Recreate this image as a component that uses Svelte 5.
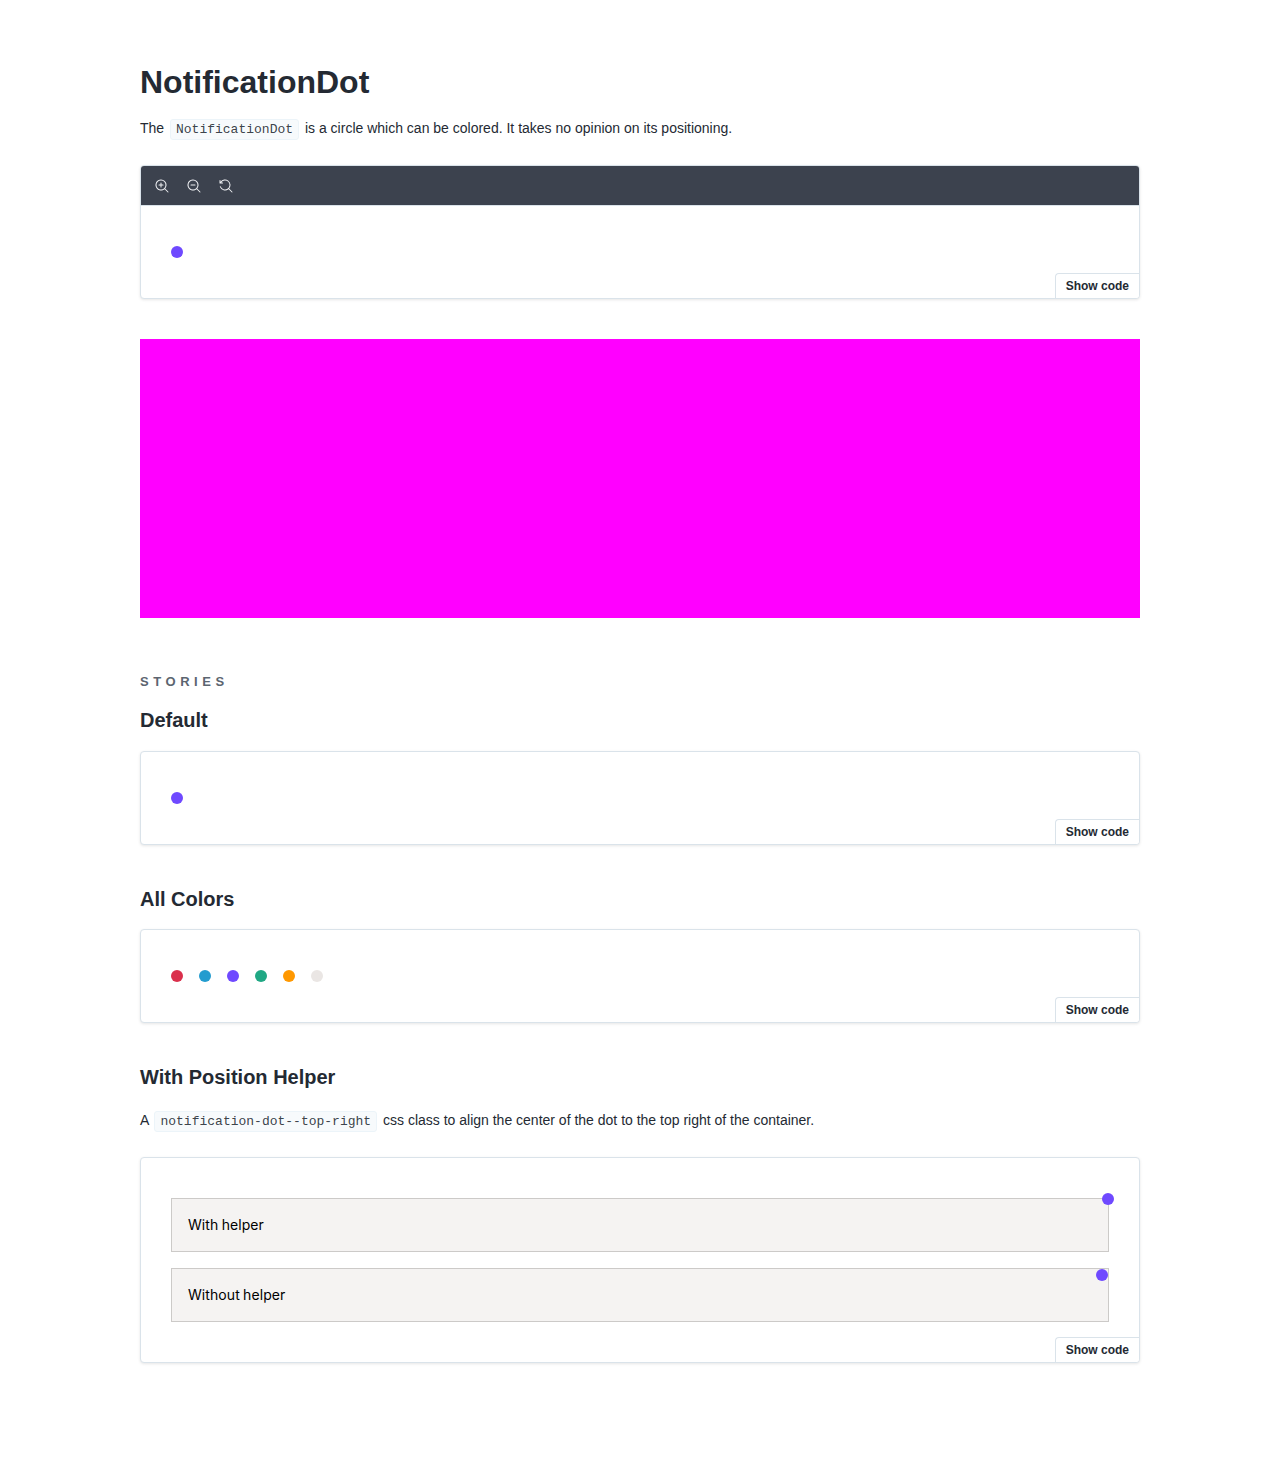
<script>
  const colors = ['red', 'blue', 'purple', 'green', 'orange', 'gray'];
  const lens =
    'M9.544 10.206a5.5 5.5 0 11.662-.662.5.5 0 01.148.102l3 3a.5.5 0 01-.708.708l-3-3a.5.5 0 01-.102-.148zM10.5 6a4.5 4.5 0 11-9 0 4.5 4.5 0 019 0z';
  const tools = [
    { label: 'Zoom in', d: 'M6 3.5a.5.5 0 01.5.5v1.5H8a.5.5 0 010 1H6.5V8a.5.5 0 01-1 0V6.5H4a.5.5 0 010-1h1.5V4a.5.5 0 01.5-.5z' + lens },
    { label: 'Zoom out', d: 'M4 5.5a.5.5 0 000 1h4a.5.5 0 000-1H4z' + lens },
    {
      label: 'Reset zoom',
      d: 'M1.5 2.837V1.5a.5.5 0 00-1 0V4a.5.5 0 00.5.5h2.5a.5.5 0 000-1H2.258a4.5 4.5 0 11-.496 4.016.5.5 0 10-.942.337 5.502 5.502 0 008.724 2.353.5.5 0 00.102.148l3 3a.5.5 0 00.708-.708l-3-3a.5.5 0 00-.148-.102A5.5 5.5 0 101.5 2.837z'
    }
  ];
</script>

{#snippet dot(color)}
  <span class="dot {color}"></span>
{/snippet}

{#snippet showCode()}
  <button class="show-code">Show code</button>
{/snippet}

<main>
  <h1>NotificationDot</h1>
  <p class="intro">The <code>NotificationDot</code> is a circle which can be colored. It takes no opinion on its positioning.</p>

  <section class="preview primary">
    <div class="toolbar">
      {#each tools as tool}
        <button class="tool" aria-label={tool.label}>
          <svg viewBox="0 0 14 14"><path fill-rule="evenodd" clip-rule="evenodd" d={tool.d} /></svg>
        </button>
      {/each}
    </div>
    <div class="canvas">{@render dot('purple')}</div>
    {@render showCode()}
  </section>

  <div class="block"></div>

  <div class="eyebrow">Stories</div>
  <h3>Default</h3>
  <section class="preview">
    <div class="canvas">{@render dot('purple')}</div>
    {@render showCode()}
  </section>

  <h3>All Colors</h3>
  <section class="preview">
    <div class="canvas dots">
      {#each colors as color}
        {@render dot(color)}
      {/each}
    </div>
    {@render showCode()}
  </section>

  <h3>With Position Helper</h3>
  <p class="note">A <code>notification-dot--top-right</code> css class to align the center of the dot to the top right of the container.</p>
  <section class="preview">
    <div class="canvas boxes">
      <div class="box">With helper<span class="dot purple corner centered"></span></div>
      <div class="box">Without helper<span class="dot purple corner"></span></div>
    </div>
    {@render showCode()}
  </section>
</main>

<style>
  :global(body) {
    margin: 0;
    background: #fff;
  }
  main {
    box-sizing: border-box;
    width: 1000px;
    height: 1467px;
    margin: 0 auto;
    padding-top: 64px;
    font-family: 'Liberation Sans', Arial, sans-serif;
    font-size: 14px;
    color: #242a33;
  }
  h1 {
    margin: 0 0 16px;
    font-size: 32px;
    line-height: 36px;
  }
  h3 {
    margin: 0 0 15.5px;
    font-size: 20px;
    line-height: 30px;
  }
  p {
    margin: 0 0 25px;
    line-height: 24px;
  }
  p.note {
    margin-top: 16px;
  }
  code {
    display: inline-block;
    margin: 0 2px;
    padding: 3px 5px;
    border: 1px solid #ecf4f9;
    border-radius: 3px;
    background: #f7fafc;
    color: rgba(36, 42, 51, 0.9);
    font-family: 'Liberation Mono', monospace;
    font-size: 13px;
    line-height: 13px;
    vertical-align: baseline;
  }
  .preview {
    position: relative;
    box-sizing: border-box;
    margin-bottom: 39px;
    border: 1px solid #dae3ea;
    border-radius: 4px;
    background: #fff;
    box-shadow: rgba(0, 0, 0, 0.1) 0 1px 3px 0;
    overflow: hidden;
  }
  .primary {
    margin-bottom: 40px;
  }
  .toolbar {
    display: flex;
    align-items: center;
    gap: 4px;
    box-sizing: border-box;
    height: 40px;
    padding-left: 7px;
    border-bottom: 1px solid #dae3ea;
    background: #3c424e;
  }
  .tool {
    display: flex;
    width: 28px;
    height: 28px;
    padding: 7px;
    border: 0;
    background: none;
  }
  .tool svg {
    width: 14px;
    height: 14px;
    fill: #f0f1f4;
  }
  .canvas {
    display: flex;
    padding: 40px 30px;
  }
  .dots {
    gap: 16px;
  }
  .dot {
    width: 12px;
    height: 12px;
    border-radius: 50%;
  }
  .red { background: #da304c; }
  .blue { background: #239ccf; }
  .purple { background: #6f49ff; }
  .green { background: #20a884; }
  .orange { background: #ff9800; }
  .gray { background: #eae6e4; }
  .boxes {
    flex-direction: column;
    gap: 16px;
  }
  .box {
    position: relative;
    padding: 16px;
    border: 1px solid #cccac8;
    background: #f5f3f2;
    color: #000;
    font-family: Inter, sans-serif;
    font-size: 14px;
    line-height: 20px;
    letter-spacing: 0.07px;
    word-spacing: -0.7px;
  }
  .corner {
    position: absolute;
    top: 0;
    right: 0;
  }
  .centered {
    transform: translate(50%, -50%);
  }
  .show-code {
    position: absolute;
    right: 0;
    bottom: 0;
    padding: 4px 10px;
    border: 1px solid #dae3ea;
    border-width: 1px 0 0 1px;
    border-radius: 4px 0 0 0;
    background: #fff;
    color: #242a33;
    font: bold 12px/16px 'Liberation Sans', Arial, sans-serif;
  }
  .block {
    height: 279px;
    margin-bottom: 56px;
    background: #f0f;
  }
  .eyebrow {
    margin-bottom: 15.25px;
    color: #5c6570;
    font-size: 13px;
    font-weight: bold;
    line-height: 16px;
    letter-spacing: 0.35em;
    text-transform: uppercase;
  }
</style>
